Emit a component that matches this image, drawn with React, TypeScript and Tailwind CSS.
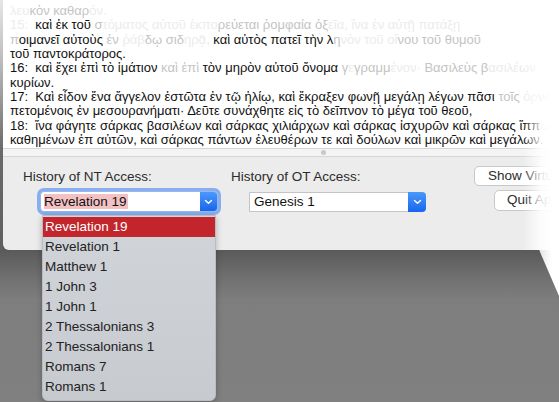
import React from "react";

const F = ({ c, children }: { c: "a" | "b"; children: React.ReactNode }) => (
  <span className={c === "a" ? "text-[#c4c4c4]" : "text-[#ececec]"}>{children}</span>
);

const items = [
  "Revelation 19",
  "Revelation 1",
  "Matthew 1",
  "1 John 3",
  "1 John 1",
  "2 Thessalonians 3",
  "2 Thessalonians 1",
  "Romans 7",
  "Romans 1",
];

const Chevron = () => (
  <svg width="9" height="6" viewBox="0 0 9 6" fill="none">
    <path d="M1.5 1.5 L4.5 4.3 L7.5 1.5" stroke="white" strokeWidth="1.4" strokeLinecap="round" strokeLinejoin="round" />
  </svg>
);

export default function App() {
  return (
    <div
      className="relative w-[559px] h-[402px] overflow-hidden bg-[linear-gradient(to_bottom,#5a5a5a_0px,#5a5a5a_250px,#6e6e6e_275px,#7e7e7e_300px,#808080_402px)]"
      style={{ fontFamily: '"Liberation Sans", Arial, sans-serif' }}
    >
      <div className="flex h-[250px]">
        <div className="w-[3px] shrink-0 h-full bg-[linear-gradient(to_bottom,#e6e6e6,#bdbdbd_60px,#6a6a6a_150px,#5f5f5f)]" />
        <div className="flex-1 min-w-0 flex flex-col rounded-bl-[6px] overflow-hidden bg-[#ececec]">
          {/* text area */}
          <div className="h-[148px] bg-white overflow-hidden pl-[7px] pt-[4px] text-[13px] leading-[14.35px] text-[#111] whitespace-pre">
            <div><F c="b">λευ</F><F c="a">κὸν καθαρ</F><F c="b">όν.</F></div>
            <div><F c="b">15:  </F>καὶ ἐκ τοῦ <F c="a">σ</F><F c="b">τόματος αὐτοῦ ἐκπο</F><F c="a">ρεύεται ῥομφαία ὀξ</F><F c="b">εῖα, ἵνα ἐν αὐτῇ πατάξῃ</F></div>
            <div><F c="a">π</F>οιμανεῖ αὐτοὺς <F c="a">ἐν </F><F c="b">ῥάβ</F><F c="a">δῳ σιδ</F><F c="b">ηρᾷ, </F>καὶ αὐτὸς πατεῖ τὴν λ<F c="a">η</F><F c="b">νὸν τοῦ οἴ</F><F c="a">νου τοῦ θυμοῦ</F></div>
            <div>τοῦ παντοκράτορος.</div>
            <div>16:  καὶ ἔχει ἐπὶ τὸ ἱμάτιον <F c="a">καὶ ἐπὶ</F> τὸν μηρὸν αὐτοῦ ὄνομα <F c="a">γ</F><F c="b">ε</F><F c="a">γραμμ</F><F c="b">ένον· </F><F c="a">Βασιλεὺς β</F><F c="b">ασιλέων</F></div>
            <div>κυρίων.</div>
            <div>17:  Καὶ εἶδον ἕνα ἄγγελον ἑστῶτα ἐν τῷ ἡλίῳ, καὶ ἔκραξεν φωνῇ μεγάλῃ λέγων πᾶσι <F c="a">τοῖς</F><F c="b"> ὀρ</F><F c="a">νέο</F></div>
            <div>πετομένοις ἐν μεσουρανήματι· Δεῦτε συνάχθητε εἰς τὸ δεῖπνον τὸ μέγα τοῦ θεοῦ,</div>
            <div>18:  ἵνα φάγητε σάρκας βασιλέων καὶ σάρκας χιλιάρχων καὶ σάρκας ἰσχυρῶν καὶ σάρκας ἵππ<F c="a">ων κ</F></div>
            <div>καθημένων ἐπ αὐτῶν, καὶ σάρκας πάντων ἐλευθέρων τε καὶ δούλων καὶ μικρῶν καὶ μεγάλων.</div>
          </div>
          {/* splitter */}
          <div className="h-[9px] border-t border-b border-[#d6d6d6] bg-[#f4f4f4] flex items-center justify-center">
            <div className="w-[5px] h-[5px] rounded-full bg-[#c8c8c8] ml-[84px]" />
          </div>
          {/* panel */}
          <div className="flex-1 flex pt-[12px] text-[13.5px] text-[#2b2b2b]">
            <div className="w-[228px] shrink-0 pl-[20px]">
              <div className="leading-[16px]">History of NT Access:</div>
              <div className="mt-[6px] ml-[17px] w-[178px] h-[21px] rounded-[4px] ring-[3px] ring-[#86aef0] flex bg-white border border-[#9bb6e8]">
                <div className="flex-1 flex items-center pl-[3px]">
                  <span className="bg-[#f3c1c3] text-[#111] leading-[15px] pr-[1px]">Revelation 19</span>
                </div>
                <div className="w-[17px] h-full rounded-r-[3px] bg-[linear-gradient(to_bottom,#4b98fb,#1766ef)] flex items-center justify-center">
                  <Chevron />
                </div>
              </div>
            </div>
            <div className="w-[243px] shrink-0">
              <div className="leading-[16px]">History of OT Access:</div>
              <div className="mt-[7px] ml-[18px] w-[177px] h-[20px] flex bg-white border border-[#c4c4c4] rounded-r-[4px]">
                <div className="flex-1 flex items-center pl-[4px] text-[#111]">Genesis 1</div>
                <div className="w-[18px] -my-px -mr-px rounded-r-[4px] bg-[linear-gradient(to_bottom,#4b98fb,#1766ef)] flex items-center justify-center">
                  <Chevron />
                </div>
              </div>
            </div>
            <div className="flex flex-col items-start -mt-[3px] shrink-0">
              <div className="h-[20px] w-[100px] bg-white border border-[#c8c8c8] rounded-[5px] flex items-center pl-[13px] whitespace-nowrap">Show Virtual</div>
              <div className="ml-[20px] mt-[4px] h-[21px] w-[90px] bg-white border border-[#c8c8c8] rounded-[5px] flex items-center pl-[12px] whitespace-nowrap">Quit App</div>
            </div>
          </div>
        </div>
      </div>

      {/* dropdown menu */}
      <div className="absolute left-[42px] top-[215px] w-[174px] h-[186px] rounded-b-[6px] bg-[linear-gradient(to_bottom,#d1d4d9,#c7cacf)] border border-[#b9bcc1] pt-[1px] text-[13.5px] text-[#222] shadow-[0_2px_6px_rgba(0,0,0,0.25)]">
        {items.map((t, i) => (
          <div
            key={t + i}
            className={
              i === 0
                ? "h-[20px] leading-[20px] pl-[2px] bg-[#c3252c] text-white"
                : "h-[20px] leading-[20px] pl-[2px]"
            }
          >
            {t}
          </div>
        ))}
      </div>

      {/* right white fade */}
      <div className="absolute right-0 top-0 w-[36px] h-[296px] bg-[linear-gradient(to_right,rgba(255,255,255,0),rgba(255,255,255,0.85)_50%,#fff_80%)] [clip-path:polygon(0_0,100%_0,100%_100%,45%_84.5%,0_84.5%)]" />
    </div>
  );
}
